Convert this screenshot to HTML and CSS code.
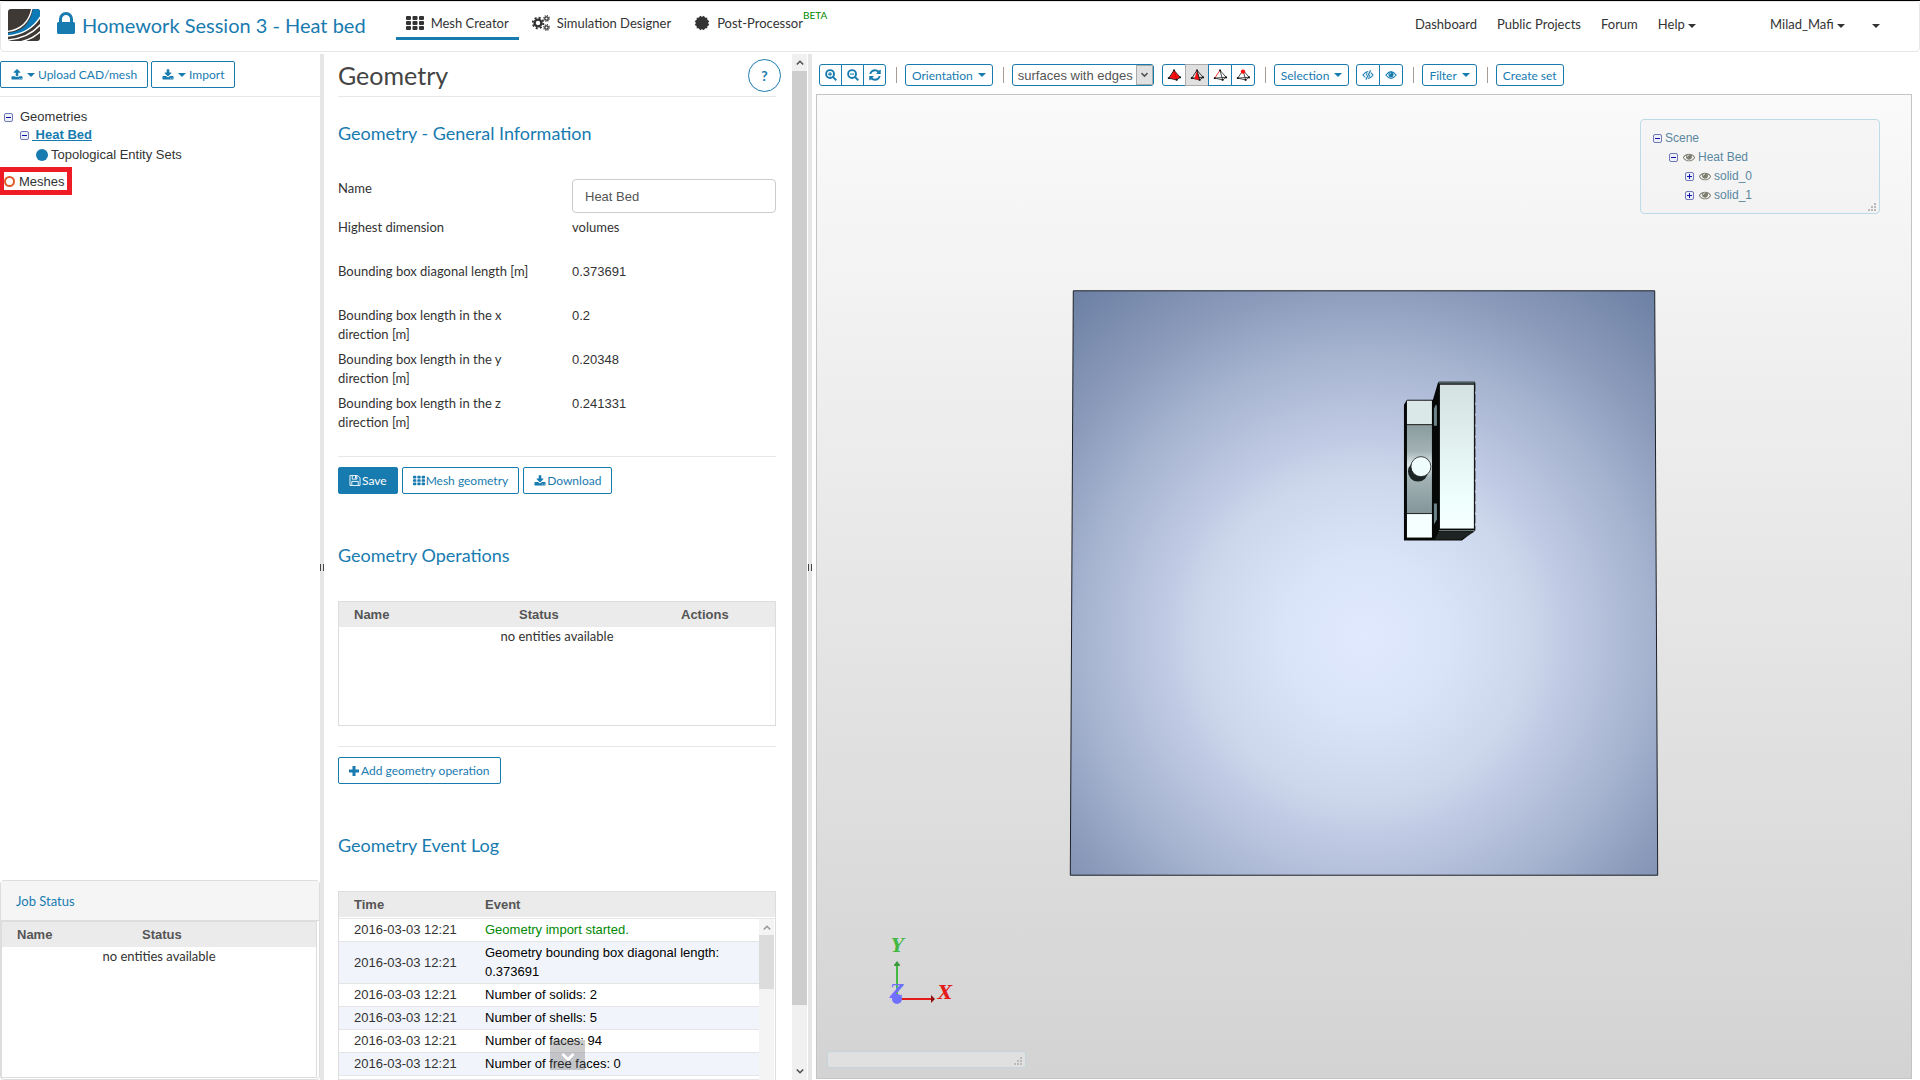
FILE: index.html
```html
<!DOCTYPE html>
<html lang="en">
<head>
  <meta charset="UTF-8">
  <meta name="viewport" content="width=device-width, initial-scale=1.0">
  <title>Homework Session 3 - Heat bed</title>
  <link rel="stylesheet" href="styles.css">
</head>
<body>

  <!-- icon sprite -->
  <svg class="sprite" aria-hidden="true">
    <symbol id="i-lock" viewBox="320 128 1152 1408"><path d="M640 768h512v-192q0-106-75-181t-181-75-181 75-75 181v192zm832 96v576q0 40-28 68t-68 28h-960q-40 0-68-28t-28-68v-576q0-40 28-68t68-28h32v-192q0-184 132-316t316-132 316 132 132 316v192h32q40 0 68 28t28 68z"/></symbol>
    <symbol id="i-download" viewBox="0 0 1792 1600"><path d="M1344 1344q0-26-19-45t-45-19-45 19-19 45 19 45 45 19 45-19 19-45zm256 0q0-26-19-45t-45-19-45 19-19 45 19 45 45 19 45-19 19-45zm128-224v320q0 40-28 68t-68 28h-1472q-40 0-68-28t-28-68v-320q0-40 28-68t68-28h465l135 136q58 56 136 56t136-56l136-136h464q40 0 68 28t28 68zm-325-569q17 41-14 70l-448 448q-18 19-45 19t-45-19l-448-448q-31-29-14-70 17-39 59-39h256v-448q0-26 19-45t45-19h256q26 0 45 19t19 45v448h256q42 0 59 39z"/></symbol>
    <symbol id="i-upload" viewBox="0 64 1792 1664"><path d="M1344 1472q0-26-19-45t-45-19-45 19-19 45 19 45 45 19 45-19 19-45zm256 0q0-26-19-45t-45-19-45 19-19 45 19 45 45 19 45-19 19-45zm128-224v320q0 40-28 68t-68 28h-1472q-40 0-68-28t-28-68v-320q0-40 28-68t68-28h427q21 56 70.5 92t110.5 36h256q61 0 110.5-36t70.5-92h427q40 0 68 28t28 68zm-325-648q-17 40-59 40h-256v448q0 26-19 45t-45 19h-256q-26 0-45-19t-19-45v-448h-256q-42 0-59-40-17-39 14-69l448-448q18-19 45-19t45 19l448 448q31 30 14 69z"/></symbol>
    <symbol id="i-refresh" viewBox="96 96 1600 1600"><path d="M1639 1056q0 5-1 7-64 268-268 434.5t-478 166.5q-146 0-282.5-55t-243.5-157l-129 129q-19 19-45 19t-45-19-19-45v-448q0-26 19-45t45-19h448q26 0 45 19t19 45-19 45l-137 137q71 66 161 102t187 36q134 0 250-65t186-179q11-17 53-117 8-23 30-23h192q13 0 22.5 9.5t9.5 22.5zm25-800v448q0 26-19 45t-45 19h-448q-26 0-45-19t-19-45 19-45l138-138q-148-137-349-137-134 0-250 65t-186 179q-11 17-53 117-8 23-30 23h-199q-13 0-22.5-9.5t-9.5-22.5v-7q65-268 270-434.5t480-166.5q146 0 284 55.5t245 156.5l130-129q19-19 45-19t45 19 19 45z"/></symbol>
    <symbol id="i-eye" viewBox="0 320 1792 1280"><path d="M1664 960q-152-236-381-353 61 104 61 225 0 185-131.5 316.5t-316.5 131.5-316.5-131.5-131.5-316.5q0-121 61-225-229 117-381 353 133 205 333.5 326.5t434.5 121.5 434.5-121.5 333.5-326.5zm-720-384q0-20-14-34t-34-14q-125 0-214.5 89.5t-89.5 214.5q0 20 14 34t34 14 34-14 14-34q0-86 61-147t147-61q20 0 34-14t14-34zm848 384q0 34-20 69-140 230-376.5 368.5t-499.5 138.5-499.5-139-376.5-368q-20-35-20-69t20-69q140-229 376.5-368t499.5-139 499.5 139 376.5 368q20 35 20 69z"/></symbol>
    <symbol id="i-th" viewBox="0 0 18 14"><path d="M1 0h3a1 1 0 0 1 1 1v2a1 1 0 0 1-1 1H1a1 1 0 0 1-1-1V1a1 1 0 0 1 1-1zM7.500 0h3a1 1 0 0 1 1 1v2a1 1 0 0 1-1 1h-3a1 1 0 0 1-1-1V1a1 1 0 0 1 1-1zM14 0h3a1 1 0 0 1 1 1v2a1 1 0 0 1-1 1h-3a1 1 0 0 1-1-1V1a1 1 0 0 1 1-1zM1 5h3a1 1 0 0 1 1 1v2a1 1 0 0 1-1 1H1a1 1 0 0 1-1-1V6a1 1 0 0 1 1-1zM7.500 5h3a1 1 0 0 1 1 1v2a1 1 0 0 1-1 1h-3a1 1 0 0 1-1-1V6a1 1 0 0 1 1-1zM14 5h3a1 1 0 0 1 1 1v2a1 1 0 0 1-1 1h-3a1 1 0 0 1-1-1V6a1 1 0 0 1 1-1zM1 10h3a1 1 0 0 1 1 1v2a1 1 0 0 1-1 1H1a1 1 0 0 1-1-1v-2a1 1 0 0 1 1-1zM7.500 10h3a1 1 0 0 1 1 1v2a1 1 0 0 1-1 1h-3a1 1 0 0 1-1-1v-2a1 1 0 0 1 1-1zM14 10h3a1 1 0 0 1 1 1v2a1 1 0 0 1-1 1h-3a1 1 0 0 1-1-1v-2a1 1 0 0 1 1-1z"/></symbol>
    <symbol id="i-cogs" viewBox="0 0 18 16" fill="none" stroke="currentColor">
      <circle cx="6" cy="8" r="3.400" stroke-width="2.400"/><circle cx="6" cy="8" r="5.300" stroke-width="1.800" stroke-dasharray="2.080 2.080"/>
      <circle cx="14.500" cy="3.500" r="1.700" stroke-width="1.300"/><circle cx="14.500" cy="3.500" r="2.800" stroke-width="1.200" stroke-dasharray="1.100 1.100"/>
      <circle cx="14.500" cy="12.500" r="1.700" stroke-width="1.300"/><circle cx="14.500" cy="12.500" r="2.800" stroke-width="1.200" stroke-dasharray="1.100 1.100"/>
    </symbol>
    <symbol id="i-burst" viewBox="-8 -8 16 16"><circle r="6"/><rect x="-5.300" y="-5.300" width="10.600" height="10.600"/><rect x="-5.300" y="-5.300" width="10.600" height="10.600" transform="rotate(30)"/><rect x="-5.300" y="-5.300" width="10.600" height="10.600" transform="rotate(60)"/></symbol>
    <symbol id="i-zoom-in" viewBox="0 0 13 13" fill="none" stroke="currentColor" stroke-width="2"><circle cx="5.500" cy="5.500" r="4.300"/><path d="M8.800 8.800l3.400 3.400"/><path d="M3.200 5.500h4.600M5.500 3.200v4.600" stroke-width="1.200"/></symbol>
    <symbol id="i-zoom-out" viewBox="0 0 13 13" fill="none" stroke="currentColor" stroke-width="2"><circle cx="5.500" cy="5.500" r="4.300"/><path d="M8.800 8.800l3.400 3.400"/><path d="M3.200 5.500h4.600" stroke-width="1.200"/></symbol>
    <symbol id="i-floppy" viewBox="0 0 12 12"><path fill="none" stroke="currentColor" d="M.5.5h8.300l2.700 2.700v8.300H.5zM2.500 11V7h7v4M3 1v3.500h5V1"/><path d="M6 1h1.500v2.800H6z"/></symbol>
    <symbol id="i-plus" viewBox="0 0 10 10"><path d="M3.500 0h3v3.500H10v3H6.500V10h-3V6.500H0v-3h3.500z"/></symbol>
    <symbol id="i-up" viewBox="0 0 10 8"><path d="M1 6.500l4-4 4 4" fill="none" stroke="currentColor" stroke-width="2"/></symbol>
    <symbol id="i-down" viewBox="0 0 10 8"><path d="M1 1.500l4 4 4-4" fill="none" stroke="currentColor" stroke-width="2"/></symbol>
    <symbol id="i-grip" viewBox="0 0 8 8"><path d="M6 0h2v2H6zM3 3h2v2H3zM6 3h2v2H6zM0 6h2v2H0zM3 6h2v2H3zM6 6h2v2H6z"/></symbol>
    <symbol id="i-minus-box" viewBox="0 0 9 9"><rect x=".5" y=".5" width="8" height="8" rx="1.500" fill="#eef0f8" stroke="#6f78b8"/><path d="M2 4.500h5" stroke="#1111b0"/></symbol>
    <symbol id="i-plus-box" viewBox="0 0 9 9"><rect x=".5" y=".5" width="8" height="8" rx="1.500" fill="#eef0f8" stroke="#6f78b8"/><path d="M2 4.500h5M4.500 2v5" stroke="#1111b0"/></symbol>
  </svg>

  <header class="navbar">
    <svg class="logo" viewBox="0 0 32 32">
      <clipPath id="logo-clip"><rect width="32" height="32" rx="3"/></clipPath>
      <g clip-path="url(#logo-clip)">
        <rect width="32" height="32" fill="#3e3935"/>
        <path d="M0 24C13 23 22 16 25 0h7v8C25 20 15 26 0 27z" fill="#0b79b5"/>
        <g fill="none" stroke="#fff" stroke-width="1.400">
          <path d="M-1 22.500C13 21 21 14 24 -1"/>
          <path d="M-1 27C14 26 25 20 33 7"/>
          <path d="M-1 31C14 30 26 23 33 15"/>
          <path d="M12 33C21 31 28 27 33 22"/>
        </g>
      </g>
    </svg>
    <a class="project" href="#"><svg class="lock"><use href="#i-lock"/></svg>Homework Session 3 - Heat bed</a>
    <nav class="tabs">
      <a class="tab active" href="#"><svg class="th"><use href="#i-th"/></svg>Mesh Creator</a>
      <a class="tab" href="#"><svg class="cogs"><use href="#i-cogs"/></svg>Simulation Designer</a>
      <a class="tab" href="#"><svg class="burst"><use href="#i-burst"/></svg>Post-Processor<span class="beta">BETA</span></a>
    </nav>
    <nav class="links">
      <a href="#">Dashboard</a>
      <a href="#">Public Projects</a>
      <a href="#">Forum</a>
      <a href="#">Help <i class="caret"></i></a>
      <a class="user" href="#">Milad_Mafi <i class="caret"></i></a>
      <a href="#" aria-label="More"><i class="caret"></i></a>
    </nav>
  </header>

  <main class="workspace">
    <aside class="sidebar">
      <div class="side-actions">
        <button class="btn"><svg class="ic"><use href="#i-upload"/></svg><i class="caret"></i>Upload CAD/mesh</button>
        <button class="btn"><svg class="ic"><use href="#i-download"/></svg><i class="caret"></i>Import</button>
      </div>
      <ul class="tree">
        <li class="level-1"><svg class="box"><use href="#i-minus-box"/></svg><span>Geometries</span></li>
        <li class="level-2"><svg class="box"><use href="#i-minus-box"/></svg><a href="#">&nbsp;Heat Bed</a></li>
        <li class="level-3"><i class="dot"></i><span>Topological Entity Sets</span></li>
      </ul>
      <div class="meshes"><i class="ring"></i>Meshes</div>

      <section class="jobs">
        <h3>Job Status</h3>
        <div class="jobs-body">
          <table class="grid">
            <thead><tr><th class="job-name">Name</th><th>Status</th></tr></thead>
            <tbody><tr><td class="none" colspan="2">no entities available</td></tr></tbody>
          </table>
        </div>
      </section>
    </aside>

    <div class="splitter"></div>

    <section class="details">
      <div class="content">
        <div class="title">
          <h1>Geometry</h1>
          <button class="help">?</button>
        </div>

        <h2 class="first">Geometry - General Information</h2>
        <form class="form">
          <label for="name">Name</label>
          <input id="name" type="text" value="Heat Bed">
          <span>Highest dimension</span><span>volumes</span>
          <span>Bounding box diagonal length [m]</span><output>0.373691</output>
          <span>Bounding box length in the x direction [m]</span><output>0.2</output>
          <span>Bounding box length in the y direction [m]</span><output>0.20348</output>
          <span>Bounding box length in the z direction [m]</span><output>0.241331</output>
        </form>
        <div class="actions">
          <button class="btn primary"><svg class="ic"><use href="#i-floppy"/></svg>Save</button>
          <button class="btn"><svg class="ic"><use href="#i-th"/></svg>Mesh geometry</button>
          <button class="btn"><svg class="ic"><use href="#i-download"/></svg>Download</button>
        </div>

        <h2>Geometry Operations</h2>
        <div class="ops">
          <table class="grid">
            <thead><tr><th class="op-name">Name</th><th class="op-status">Status</th><th>Actions</th></tr></thead>
            <tbody><tr><td class="none" colspan="3">no entities available</td></tr></tbody>
          </table>
        </div>
        <div class="actions">
          <button class="btn"><svg class="ic plus"><use href="#i-plus"/></svg>Add geometry operation</button>
        </div>

        <h2>Geometry Event Log</h2>
        <div class="log">
          <div class="log-head"><span>Time</span><span>Event</span></div>
          <div class="log-body">
            <table class="events">
              <tr><td>2016-03-03 12:21</td><td class="ok">Geometry import started.</td></tr>
              <tr><td>2016-03-03 12:21</td><td>Geometry bounding box diagonal length: 0.373691</td></tr>
              <tr><td>2016-03-03 12:21</td><td>Number of solids: 2</td></tr>
              <tr><td>2016-03-03 12:21</td><td>Number of shells: 5</td></tr>
              <tr><td>2016-03-03 12:21</td><td>Number of faces: 94</td></tr>
              <tr><td>2016-03-03 12:21</td><td>Number of free faces: 0</td></tr>
              <tr><td></td><td></td></tr>
            </table>
            <div class="scroll inner"><svg class="arrow"><use href="#i-up"/></svg><div class="thumb"></div></div>
          </div>
        </div>
      </div>
      <div class="scroll">
        <svg class="arrow"><use href="#i-up"/></svg>
        <div class="thumb"></div>
        <svg class="arrow"><use href="#i-down"/></svg>
      </div>
      <button class="more" aria-label="Scroll down"><svg><use href="#i-down"/></svg></button>
    </section>

    <div class="splitter"></div>

    <section class="viewer">
      <div class="toolbar">
        <div class="group">
          <button class="tool" aria-label="Zoom in"><svg><use href="#i-zoom-in"/></svg></button>
          <button class="tool" aria-label="Zoom out"><svg><use href="#i-zoom-out"/></svg></button>
          <button class="tool" aria-label="Reset"><svg><use href="#i-refresh"/></svg></button>
        </div>
        <i class="sep"></i>
        <button class="tool text">Orientation <i class="caret"></i></button>
        <i class="sep"></i>
        <div class="select">
          <select aria-label="Render mode"><option>surfaces with edges</option></select>
          <svg><use href="#i-down"/></svg>
        </div>
        <div class="group pick">
          <button class="tool" aria-label="Pick volumes"><svg viewBox="0 0 16 14"><path d="M8 1L2 10l9 2 4-3z" fill="#f11" stroke="#222"/><path d="M8 1l3 11" stroke="#c00"/><path d="M1 9h2v2H1zM10 11h2v2h-2zM14 8h2v2h-2zM7 0h2v2H7z" fill="#111"/></svg></button>
          <button class="tool pressed" aria-label="Pick faces"><svg viewBox="0 0 16 14"><path d="M8 1L2 10l9 2 4-3zM2 10l13-1" fill="#ddd" stroke="#222"/><path d="M8 1L5 11l6 1z" fill="#f11"/><path d="M8 1l3 11" stroke="#111"/><path d="M1 9h2v2H1zM10 11h2v2h-2zM14 8h2v2h-2zM7 0h2v2H7z" fill="#111"/></svg></button>
          <button class="tool" aria-label="Pick edges"><svg viewBox="0 0 16 14"><path d="M8 1l3 11 4-3zM2 10l9 2M2 10l13-1" fill="#fff" stroke="#333"/><path d="M8 1L2 10" stroke="#f22"/><path d="M1 9h2v2H1zM10 11h2v2h-2zM14 8h2v2h-2zM7 0h2v2H7z" fill="#111"/></svg></button>
          <button class="tool" aria-label="Pick points"><svg viewBox="0 0 16 14"><path d="M8 1L2 10l9 2 4-3zM8 1l3 11M2 10l13-1" fill="#fff" stroke="#333"/><circle cx="8" cy="2.500" r="2.500" fill="#f11"/><path d="M1 9h2v2H1zM10 11h2v2h-2zM14 8h2v2h-2z" fill="#111"/></svg></button>
        </div>
        <i class="sep"></i>
        <button class="tool text">Selection <i class="caret"></i></button>
        <div class="group eyes">
          <button class="tool" aria-label="Hide"><svg viewBox="0 0 14 12"><path d="M1 6q6-8 12 0q-6 8-12 0z" fill="none" stroke="currentColor" stroke-width="1.300"/><circle cx="7" cy="6" r="2.700"/><path d="M4 12L10 0" stroke="#fff" stroke-width="3"/><path d="M4.500 11.500L10 .5" stroke="currentColor" stroke-width="1.300"/></svg></button>
          <button class="tool" aria-label="Show"><svg viewBox="0 0 14 12"><path d="M1 6q6-8 12 0q-6 8-12 0z" fill="none" stroke="currentColor" stroke-width="1.300"/><circle cx="7" cy="5.500" r="3"/><path d="M5.500 5.200q0-1.300 1.400-1.400" fill="none" stroke="#fff" stroke-width=".8"/></svg></button>
        </div>
        <i class="sep"></i>
        <button class="tool text">Filter <i class="caret"></i></button>
        <i class="sep"></i>
        <button class="tool text">Create set</button>
      </div>

      <div class="canvas">
        <!-- heat bed plate with the hot end above it -->
        <svg class="model" viewBox="0 0 1094 984">
          <defs>
            <radialGradient id="plate" gradientUnits="userSpaceOnUse" cx="548" cy="542" r="455">
              <stop offset="0" stop-color="#e1e9fe"/>
              <stop offset=".18" stop-color="#d9e4f8"/>
              <stop offset=".36" stop-color="#ccd7eb"/>
              <stop offset=".44" stop-color="#c1cae4"/>
              <stop offset=".62" stop-color="#a6b4d0"/>
              <stop offset=".78" stop-color="#8b9aba"/>
              <stop offset="1" stop-color="#6a7fa3"/>
            </radialGradient>
            <linearGradient id="block" x2="0" y2="1"><stop offset="0" stop-color="#d3e2e1"/><stop offset=".8" stop-color="#effffe"/><stop offset="1" stop-color="#f6ffff"/></linearGradient>
            <linearGradient id="steel" x2="0" y2="1"><stop offset="0" stop-color="#8a9b9e"/><stop offset=".3" stop-color="#a2b2b5"/><stop offset=".45" stop-color="#dfe9ea"/><stop offset=".6" stop-color="#a2b2b5"/><stop offset="1" stop-color="#84959a"/></linearGradient>
          </defs>
          <path d="M256 196H838L841 781H253z" fill="url(#plate)" stroke="#1c2026"/>
          <g transform="translate(0 3)">
            <path d="M587 307l3-5h26l5-17 1-1h36v149l-13 10h-58z" fill="#060808"/>
            <path d="M622 434h36l-14 8h-26z" fill="#1e2423"/>
            <rect x="590" y="303" width="25" height="24" fill="#dae8e8"/>
            <rect x="590" y="327" width="25" height="89" fill="url(#steel)"/>
            <rect x="590" y="416" width="25" height="24" fill="#f6ffff"/>
            <path d="M590 327h25M590 416h25" stroke="#222"/>
            <path d="M617 311q3-8 3 0v17h-3zM617 406h3v16l-3 5z" fill="#6d8588"/>
            <rect x="622" y="284" width="36" height="2" fill="#4b5a5c"/>
            <rect x="623" y="287" width="34" height="144" fill="url(#block)"/>
            <path d="M622 433h36" stroke="#6d8580"/>
            <path d="M658 285v148" stroke="#111" stroke-dasharray="9 2"/>
            <circle cx="601" cy="374" r="10" fill="#1c2424"/>
            <circle cx="604" cy="369" r="10" fill="#eefcfc" stroke="#222" stroke-width=".8"/>
          </g>
        </svg>

        <svg class="axes" viewBox="0 -20 90 100">
          <path d="M18 62V27" stroke="#43b843" stroke-width="2"/>
          <path d="M15 28l3-4 3 4v1h-6z" fill="#3a9a3a"/>
          <path d="M18 62h34" stroke="#e31b1b" stroke-width="2"/>
          <path d="M52 58l4 4-4 4z" fill="#8f1111"/>
          <circle cx="18" cy="62" r="5" fill="#7070ff"/>
          <text x="12" y="15" fill="#43b843">Y</text>
          <text x="59" y="62" fill="#e31b1b">X</text>
          <text x="11" y="61" fill="#7070ff">Z</text>
        </svg>

        <div class="scene">
          <ul>
            <li><svg class="box"><use href="#i-minus-box"/></svg>Scene</li>
            <li class="in-1"><svg class="box"><use href="#i-minus-box"/></svg><svg class="eye"><use href="#i-eye"/></svg>Heat Bed</li>
            <li class="in-2"><svg class="box"><use href="#i-plus-box"/></svg><svg class="eye"><use href="#i-eye"/></svg>solid_0</li>
            <li class="in-2"><svg class="box"><use href="#i-plus-box"/></svg><svg class="eye"><use href="#i-eye"/></svg>solid_1</li>
          </ul>
          <svg class="grip"><use href="#i-grip"/></svg>
        </div>
        <div class="console"><svg class="grip"><use href="#i-grip"/></svg></div>
      </div>
    </section>
  </main>

</body>
</html>
```
FILE: styles.css
```css
* { box-sizing: border-box; }
body {
  margin: 0;
  height: 100vh;
  display: flex;
  flex-direction: column;
  overflow: hidden;
  border-top: 1px solid #000;
  background: #fff;
  color: #333;
  font-family: Lato, sans-serif;
  font-size: 13px;
  line-height: 19px;
}
a { color: inherit; text-decoration: none; }
ul { list-style: none; margin: 0; padding: 0; }
svg { fill: currentColor; flex: none; }
h1, h2, h3 { margin: 0; font-weight: 400; }
button, input, select { font-family: inherit; margin: 0; }
.sprite { position: absolute; width: 0; height: 0; }
.caret {
  display: inline-block;
  border: 4px solid transparent;
  border-top-color: currentColor;
  border-bottom: 0;
  vertical-align: middle;
}

/* top bar */
.navbar {
  display: flex;
  align-items: center;
  height: 51px;
  flex: none;
  padding: 0 39px 4px 7px;
  border: 1px solid #e7e7e7;
  border-radius: 4px;
  margin-bottom: 2px;
}
.logo { width: 32px; height: 32px; }
.project {
  display: flex;
  align-items: center;
  gap: 7px;
  margin-left: 17px;
  color: #187bb0;
  font-size: 20px;
  line-height: 24px;
}
.lock { width: 18px; height: 22px; margin-bottom: 3px; }
.tabs { display: flex; gap: 3px; margin-left: 30px; }
.tab {
  display: flex;
  align-items: center;
  height: 31px;
  padding: 0 10px;
  color: #333;
  border-bottom: 3px solid transparent;
}
.tab.active { border-color: #187bb0; }
.th { width: 18px; height: 14px; margin-right: 7px; }
.cogs { width: 18px; height: 16px; margin-right: 7px; }
.burst { width: 16px; height: 16px; margin-right: 7px; }
.beta { align-self: flex-start; font-size: 10px; line-height: 12px; color: #080; }
.links { display: flex; gap: 20px; margin-left: auto; }
.links .user { margin-left: 54px; }
.links a:last-child { margin-left: 7px; }

.workspace { display: flex; flex: 1; min-height: 0; }
.splitter {
  flex: none;
  display: flex;
  align-items: center;
  justify-content: flex-end;
  width: 4px;
  background: #e6e6e6;
}
.splitter::after {
  content: "";
  width: 3px;
  height: 7px;
  border: solid #444;
  border-width: 0 1px;
}

/* buttons */
.btn {
  display: inline-flex;
  align-items: center;
  height: 27px;
  padding: 0 10px;
  border: 1px solid #187bb0;
  border-radius: 2px;
  background: #fff;
  color: #187bb0;
  font-size: 12px;
  line-height: 18px;
}
.btn.primary { background: #187bb0; color: #fff; }
.btn .ic { width: 12px; height: 11px; margin-right: 1px; }
.btn .caret { margin: 0 3px; }

/* left column */
.sidebar {
  flex: none;
  width: 320px;
  display: flex;
  flex-direction: column;
}
.side-actions {
  display: flex;
  gap: 3px;
  padding: 7px 0 8px;
  border-bottom: 1px solid #e7e7e7;
}
.tree { padding-top: 11px; font: 13px/18px "Liberation Sans", sans-serif; }
.tree li { display: flex; align-items: center; }
.box { width: 9px; height: 9px; }
.level-1 { padding-left: 4px; gap: 7px; }
.level-2 { padding-left: 20px; gap: 3px; }
.level-2 a { color: #187bb0; font-weight: 700; text-decoration: underline; }
.level-3 { padding: 2px 0 0 36px; gap: 3px; }
.dot { width: 12px; height: 12px; border-radius: 50%; background: #187bb0; }
.meshes {
  align-self: flex-start;
  display: flex;
  align-items: center;
  gap: 4px;
  width: 72px;
  height: 28px;
  margin-top: 3px;
  border: 5px solid #ee1c25;
  border-left-width: 4px;
  font-family: "Liberation Sans", sans-serif;
}
.ring { width: 11px; height: 11px; border: 2px solid #e05a28; border-radius: 50%; }
.jobs {
  display: flex;
  flex-direction: column;
  height: 200px;
  margin-top: auto;
  border: 1px solid #ddd;
  border-radius: 4px;
}
.jobs h3 {
  padding: 11px 15px 9px;
  color: #187bb0;
  background: #f5f5f5;
  border-bottom: 1px solid #ddd;
  font-size: 13px;
}
.jobs-body { flex: 1; margin: 0 2px 1px 0; border: 1px solid #ddd; }
.grid { width: 100%; border-collapse: collapse; table-layout: fixed; }
.grid th {
  height: 25px;
  padding: 0 0 0 15px;
  background: #ebebeb;
  color: #555;
  text-align: left;
  font: 700 13px/19px "Liberation Sans", sans-serif;
}
.grid .none { padding: 0; text-align: center; }
.job-name { width: 125px; }

/* middle column */
.details {
  position: relative;
  flex: none;
  display: flex;
  width: 484px;
}
.content { flex: 1; min-width: 0; padding: 0 16px 0 14px; overflow: hidden; }
.title {
  display: flex;
  justify-content: space-between;
  align-items: center;
  height: 43px;
  border-bottom: 1px solid #e7e7e7;
}
h1 { color: #444; font-size: 25px; line-height: 30px; }
.help {
  width: 33px;
  height: 33px;
  margin-right: -5px;
  border: 1px solid #187bb0;
  border-radius: 50%;
  background: #fff;
  color: #187bb0;
  font-size: 14px;
  font-weight: 700;
}
h2 { margin: 49px 0 34px; color: #187bb0; font-size: 18px; line-height: 24px; }
h2.first { margin-top: 24px; }
.form {
  display: grid;
  grid-template-columns: 204px 1fr;
  grid-template-rows: 39px;
  grid-auto-rows: 44px;
  column-gap: 30px;
  padding-bottom: 18px;
  border-bottom: 1px solid #e7e7e7;
}
.form output, .form input { font-family: "Liberation Sans", sans-serif; }
.form input {
  height: 34px;
  width: 100%;
  padding: 0 12px;
  border: 1px solid #ccc;
  border-radius: 4px;
  color: #555;
  font-size: 13px;
}
.actions { display: flex; gap: 4px; margin-top: 10px; }
.btn .plus { width: 10px; height: 10px; margin-right: 2px; }
.ops {
  height: 125px;
  margin-bottom: 20px;
  border: 1px solid #ddd;
}
.ops + .actions { border-top: 1px solid #e7e7e7; padding-top: 10px; }
.op-name { width: 165px; }
.op-status { width: 162px; }
.log { border: 1px solid #ddd; }
.log-head {
  display: flex;
  height: 25px;
  align-items: center;
  padding-left: 15px;
  background: #ebebeb;
  color: #555;
  font: 700 13px/19px "Liberation Sans", sans-serif;
}
.log-head span:first-child { width: 131px; }
.log-body { display: flex; margin-top: 1px; border-top: 1px solid #e7e7e7; }
.events {
  flex: 1;
  border-collapse: collapse;
  font-family: "Liberation Sans", sans-serif;
}
.events tr { border-bottom: 1px solid #e5e5e5; }
.events tr:nth-child(even) { background: #f1f5fb; }
.events td { padding: 2px 0 2px 15px; color: #000; line-height: 19px; }
.events td:first-child { width: 131px; color: #333; white-space: nowrap; }
.events td:last-child { padding: 1px 20px 2px 15px; }
.events td:first-child { padding: 1px 0 2px 15px; }
.events td.ok { color: #080; }

.scroll {
  flex: none;
  width: 15px;
  display: flex;
  flex-direction: column;
  align-items: center;
  margin-right: 1px;
  padding: 5px 0;
  background: #f0f0f0;
  color: #505050;
}
.scroll .arrow { width: 8px; height: 7px; }
.scroll .thumb { width: 15px; flex: 1; margin: 5px 0 63px; background: #cdcdcd; }
.scroll.inner { color: #999; background: #f4f4f4; }
.scroll.inner .thumb { flex: none; height: 54px; margin: 4px 0 0; background: #dcdcdc; }
.more {
  position: absolute;
  left: 226px;
  bottom: 10px;
  display: flex;
  align-items: center;
  justify-content: center;
  width: 35px;
  height: 30px;
  padding: 4px 0 0;
  border: 0;
  background: rgba(110, 110, 110, 0.35);
  color: #fff;
}
.more svg { width: 14px; height: 11px; }

/* 3d view */
.viewer {
  flex: 1;
  min-width: 0;
  display: flex;
  flex-direction: column;
  padding: 10px 8px 0 4px;
}
.toolbar { display: flex; align-items: center; height: 22px; margin: 0 3px 8px; }
.group { display: flex; }
.tool {
  display: flex;
  align-items: center;
  justify-content: center;
  width: 23px;
  height: 22px;
  padding: 0;
  border: 1px solid #187bb0;
  background: #fff;
  color: #187bb0;
  font-size: 12px;
}
.group .tool + .tool { margin-left: -1px; }
.group .tool:first-child { border-radius: 3px 0 0 3px; }
.group .tool:last-child { border-radius: 0 3px 3px 0; }
.tool svg { width: 12px; height: 12px; }
.tool.text { width: auto; padding: 0 6px; gap: 5px; border-radius: 3px; }
.tool.pressed { background: #e0e0e0; border-color: #aaa; }
.pick { margin-left: 8px; }
.pick .tool { width: 24px; }
.pick .tool svg { width: 14px; height: 13px; fill: none; }
.eyes { margin-left: 7px; }
.eyes .tool { width: 24px; }
.sep { width: 1px; height: 16px; margin: 0 8px 0 10px; background: #a99c94; }
.select { position: relative; color: #555; }
.select select {
  appearance: none;
  display: block;
  width: 142px;
  height: 22px;
  padding: 0 20px 0 5px;
  border: 1px solid #187bb0;
  border-radius: 3px;
  background: #fff;
  color: #555;
  font: 13px "Liberation Sans", sans-serif;
}
.select svg {
  position: absolute;
  top: 1px;
  right: 1px;
  width: 17px;
  height: 20px;
  padding: 6px 3px;
  border: 1px solid #aaa;
  background: #e1e1e1;
}
.canvas {
  position: relative;
  flex: 1;
  min-height: 0;
  margin-bottom: 1px;
  border: 1px solid #c4c4c4;
  background: linear-gradient(#fafafa, #d3d3d3);
}
.model { display: block; width: 100%; height: 100%; }
.axes { position: absolute; left: 62px; bottom: 61px; width: 90px; height: 100px; }
.axes text { font: italic 700 18px "DejaVu Serif", serif; }
.scene {
  position: absolute;
  top: 24px;
  right: 31px;
  width: 240px;
  height: 95px;
  padding: 9px 12px;
  border: 1px solid #bcdbe6;
  border-radius: 4px;
  background: rgba(240, 240, 240, 0.4);
  color: #5a87a0;
  font: 12px/19px "Liberation Sans", sans-serif;
}
.scene li { display: flex; align-items: center; gap: 3px; }
.scene .in-1 { padding-left: 16px; }
.scene .in-2 { padding-left: 32px; }
.scene .eye { width: 12px; height: 9px; margin-left: 2px; color: #7d7d70; }
.grip { position: absolute; right: 3px; bottom: 2px; width: 8px; height: 8px; color: #bbb; }
.console {
  position: absolute;
  left: 10px;
  bottom: 10px;
  width: 199px;
  height: 17px;
  border: 1px solid #c4d5db;
  border-radius: 3px;
  background: #e0e0e0;
}
```
